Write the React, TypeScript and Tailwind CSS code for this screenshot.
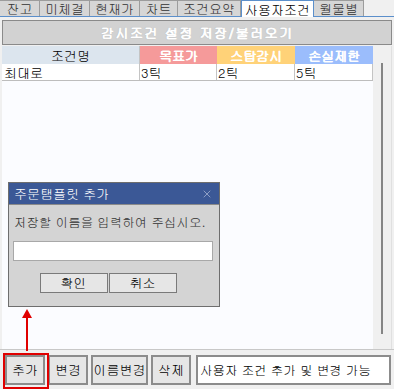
import { X } from "lucide-react";

const tabs = [
  { label: "잔고", w: "w-[40px]" },
  { label: "미체결", w: "w-[50px]" },
  { label: "현재가", w: "w-[50px]" },
  { label: "차트", w: "w-[38px]" },
  { label: "조건요약", w: "w-[63px]" },
  { label: "사용자조건", w: "w-[73px]", active: true },
  { label: "월물별", w: "w-[50px]" },
];

const App = () => {
  return (
    <div className="relative w-[394px] h-[389px] overflow-hidden bg-[#f0f0f0] text-[12px] text-black font-['Gulim','Noto_Sans_CJK_KR',sans-serif]">
      {/* Tabs */}
      <div className="flex h-[17px] border-b border-[#5b8fcb]">
        {tabs.map((t) =>
          t.active ? (
            <div
              key={t.label}
              className={`${t.w} -mb-px flex items-center justify-center bg-white border border-b-0 border-[#5b8fcb] text-[13px] leading-none`}
            >
              {t.label}
            </div>
          ) : (
            <div
              key={t.label}
              className={`${t.w} flex items-center justify-center bg-[#d6d6d6] border-r border-t border-[#9c9c9c] text-[13px] leading-none text-[#333]`}
            >
              {t.label}
            </div>
          )
        )}
      </div>

      {/* Main panel */}
      <div className="mx-[2px] mt-[3px] flex flex-col">
        <div className="h-[25px] flex items-center justify-center bg-[#d2d2d2] border border-[#8a8a8a] text-white font-bold text-[13px] tracking-[1.5px] [text-shadow:0.6px_0_0_#fff,0_0_1px_#a8a8a8]">
          감시조건 설정 저장/불러오기
        </div>

        <div className="flex h-[304px] mt-px">
          {/* Table area */}
          <div className="w-[371px] bg-[#fbfcff] flex flex-col">
            <div className="flex h-[18px] text-[13px] leading-none">
              <div className="w-[138px] bg-[#dce5ee] flex items-center justify-center border-r border-[#c4c4c4]">조건명</div>
              <div className="w-[77px] bg-[#f59a9a] text-white font-bold flex items-center justify-center [text-shadow:0.5px_0_0_#fff]">목표가</div>
              <div className="w-[78px] bg-[#ffd278] text-white font-bold flex items-center justify-center [text-shadow:0.5px_0_0_#fff]">스탑감시</div>
              <div className="w-[78px] bg-[#9bbdfc] text-white font-bold flex items-center justify-center [text-shadow:0.5px_0_0_#fff]">손실제한</div>
            </div>
            <div className="flex h-[17px] bg-white border-b border-[#bdbdbd] text-[13px] leading-none">
              <div className="w-[138px] border-r border-[#c4c4c4] flex items-center pl-[2px]">최대로</div>
              <div className="w-[77px] border-r border-[#c4c4c4] flex items-center pl-[1px]">3틱</div>
              <div className="w-[78px] border-r border-[#c4c4c4] flex items-center pl-[1px]">2틱</div>
              <div className="w-[78px] border-r border-[#c4c4c4] flex items-center pl-[1px]">5틱</div>
            </div>
          </div>
          {/* Scrollbar strip */}
          <div className="flex-1 flex bg-[#f0f0f0] border-r border-[#e0e0e0]">
            <div className="ml-[8px] mt-[17px] mb-[16px] w-[2px] bg-[#858585]" />
          </div>
        </div>
      </div>

      {/* Bottom bar */}
      <div className="absolute left-0 right-0 top-[349px] bottom-0 border-t border-[#c8c8c8] flex items-center gap-[3px] pl-[5px] pr-[3px] pt-[1px]">
        <div className="relative w-[40px] h-[30px] bg-[#e6e6e6] border-2 border-[#8c8c8c] flex items-center justify-center text-[13px]">
          추가
          <div className="absolute -left-[4px] -top-[4px] w-[46px] h-[36px] border-2 border-[#e00000]" />
        </div>
        <div className="w-[40px] h-[30px] bg-[#e6e6e6] border-2 border-[#8c8c8c] flex items-center justify-center text-[13px]">변경</div>
        <div className="w-[57px] h-[30px] bg-[#e6e6e6] border-2 border-[#8c8c8c] flex items-center justify-center text-[13px]">이름변경</div>
        <div className="w-[40px] h-[30px] bg-[#e6e6e6] border-2 border-[#8c8c8c] flex items-center justify-center text-[13px]">삭제</div>
        <div className="flex-1 ml-[2px] h-[30px] bg-white border-2 border-[#8c8c8c] flex items-center pl-[2px] text-[12.5px] whitespace-nowrap">
          사용자 조건 추가 및 변경 가능
        </div>
      </div>

      {/* Red arrow */}
      <div className="absolute left-[26px] top-[316px] w-[2px] h-[35px] bg-[#e00000]" />
      <svg className="absolute left-[22px] top-[309px]" width="10" height="9" viewBox="0 0 10 9">
        <polygon points="5,0 10,9 0,9" fill="#e00000" />
      </svg>

      {/* Dialog */}
      <div className="absolute left-[8px] top-[182px] w-[212px] h-[125px] bg-[#d4d4d4] border border-[#6e6e6e] flex flex-col">
        <div className="h-[22px] bg-[#3b5896] flex items-center justify-between pl-[5px] pr-[6px] text-white text-[13px] border-b border-[#8a8a8a]">
          <span>주문탬플릿 추가</span>
          <X size={12} strokeWidth={1.5} className="text-[#aab6d4]" />
        </div>
        <div className="pl-[5px] pt-[11px] text-[12.5px] text-[#333] leading-none whitespace-nowrap">저장할 이름을 입력하여 주십시오.</div>
        <div className="ml-[4px] mt-[12px] w-[200px] h-[20px] bg-white border border-[#a8a8a8]" />
        <div className="flex justify-center gap-[1px] mt-[12px] pr-[12px]">
          <div className="w-[68px] h-[20px] bg-[#e6e6e6] border border-[#7a7a7a] flex items-center justify-center text-[13px]">확인</div>
          <div className="w-[68px] h-[20px] bg-[#e6e6e6] border border-[#7a7a7a] flex items-center justify-center text-[13px]">취소</div>
        </div>
      </div>
    </div>
  );
};

export default App;
